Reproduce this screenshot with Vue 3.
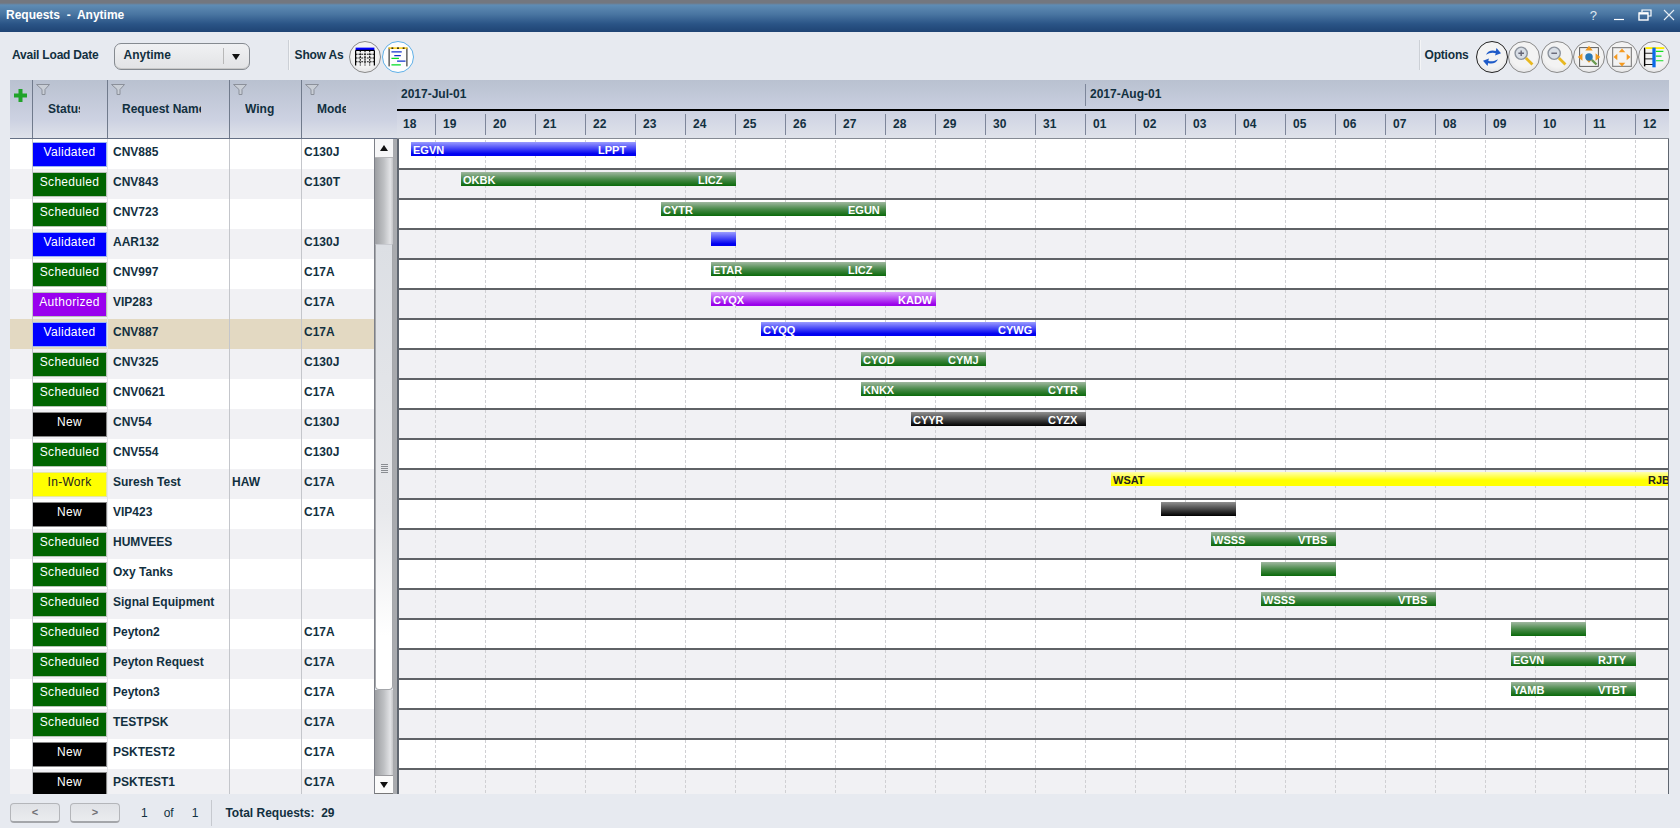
<script setup>
const rows = [
  ['Validated','CNV885','','C130J'],['Scheduled','CNV843','','C130T'],['Scheduled','CNV723','',''],
  ['Validated','AAR132','','C130J'],['Scheduled','CNV997','','C17A'],['Authorized','VIP283','','C17A'],
  ['Validated','CNV887','','C17A'],['Scheduled','CNV325','','C130J'],['Scheduled','CNV0621','','C17A'],
  ['New','CNV54','','C130J'],['Scheduled','CNV554','','C130J'],['In-Work','Suresh Test','HAW','C17A'],
  ['New','VIP423','','C17A'],['Scheduled','HUMVEES','',''],['Scheduled','Oxy Tanks','',''],
  ['Scheduled','Signal Equipment','',''],['Scheduled','Peyton2','','C17A'],['Scheduled','Peyton Request','','C17A'],
  ['Scheduled','Peyton3','','C17A'],['Scheduled','TESTPSK','','C17A'],['New','PSKTEST2','','C17A'],['New','PSKTEST1','','C17A'],
].map(r => ({ status: r[0], name: r[1], wing: r[2], model: r[3] }))

const bars = [
  [411,636,'Validated','EGVN','LPPT'],[461,736,'Scheduled','OKBK','LICZ'],[661,886,'Scheduled','CYTR','EGUN'],
  [711,736,'Validated','',''],[711,886,'Scheduled','ETAR','LICZ'],[711,936,'Authorized','CYQX','KADW'],
  [761,1036,'Validated','CYQQ','CYWG'],[861,986,'Scheduled','CYOD','CYMJ'],[861,1086,'Scheduled','KNKX','CYTR'],
  [911,1086,'New','CYYR','CYZX'],null,[1111,1686,'In-Work','WSAT','RJB'],
  [1161,1236,'New','',''],[1211,1336,'Scheduled','WSSS','VTBS'],[1261,1336,'Scheduled','',''],
  [1261,1436,'Scheduled','WSSS','VTBS'],[1511,1586,'Scheduled','',''],[1511,1636,'Scheduled','EGVN','RJTY'],
  [1511,1636,'Scheduled','YAMB','VTBT'],null,null,null,
]

const days = ['18','19','20','21','22','23','24','25','26','27','28','29','30','31','01','02','03','04','05','06','07','08','09','10','11','12']
const cls = s => s.toLowerCase().replace('-', '')
const columns = [
  { label: 'Status', w: 75, pad: 15, clip: 32 },
  { label: 'Request Name', w: 122, pad: 14, clip: 79 },
  { label: 'Wing', w: 72, pad: 15, clip: 40 },
  { label: 'Model', w: 93, pad: 15, clip: 29 },
]
</script>

<template>
  <div class="page">
    <header class="titlebar">
      <span class="title">Requests&nbsp; -&nbsp; Anytime</span>
      <div class="winbtns">
        <span class="q">?</span>
        <svg width="12" height="12" viewBox="0 0 12 12"><path d="M1 10.500h10" stroke="#fff" stroke-width="1.200"/></svg>
        <svg width="14" height="12" viewBox="0 0 14 12" fill="none" stroke="#fff"><path d="M4 3V1h9v6h-3" stroke-width="1.200"/><rect x="1" y="4" width="9" height="7" stroke-width="1.400"/><path d="M1 4.500h9" stroke-width="2"/></svg>
        <svg class="closex" width="12" height="12" viewBox="0 0 12 12"><path d="M1 1l10 10M11 1L1 11" stroke="#e8eef4" stroke-width="1.100"/></svg>
      </div>
    </header>

    <div class="toolbar">
      <span class="tlabel">Avail Load Date</span>
      <div class="combo"><span class="combotext">Anytime</span><i class="combosep"></i><i class="arrow"></i></div>
      <i class="vsep first"></i>
      <span class="tlabel">Show As</span>
      <div class="iconset">
        <button class="round">
          <svg viewBox="0 0 32 32" width="30" height="30"><rect x="6" y="6" width="20" height="3.500" fill="#00f"/><path d="M6 13h20M6 17h20M6 21h20M11 9v16M16 9v16M21 9v16" fill="none" stroke="#111" stroke-width="1.200" stroke-dasharray="2 1"/><path d="M6 9v16M26 9v16M6 9h20" stroke="#000" stroke-width="1.300"/></svg>
        </button>
        <button class="round active">
          <svg viewBox="0 0 32 32" width="30" height="30"><path d="M6.500 6v20M25.500 6v20" stroke="#000"/><path d="M6 6.500h20" stroke="#fc0" stroke-width="1.500"/><path d="M9 6.500h2M15 6.500h2M21 6.500h2" stroke="#000" stroke-width="1.500"/><path d="M9 10.500h11M12 14.500h7M15 20.500h9" stroke="#13c" stroke-width="1.300"/><path d="M9 17.500h8M9 24.500h10" stroke="#0d2" stroke-width="1.300"/></svg>
        </button>
      </div>
      <div class="spacer"></div>
      <i class="vsep"></i>
      <span class="tlabel opt">Options</span>
      <div class="iconset opts">
        <button class="round dark">
          <svg viewBox="0 0 32 32" width="30" height="30" fill="#1f5bc8"><g transform="translate(16 16) scale(.8) translate(-16 -16)"><path d="M8 13c2-5 8-7 13-5l1-4 6 7-8 3 1-3c-4-1.500-9-.500-13 2z"/><path d="M24 19c-2 5-8 7-13 5l-1 4-6-7 8-3-1 3c4 1.500 9 .500 13-2z"/></g></svg>
        </button>
        <button class="round">
          <svg viewBox="0 0 32 32" width="30" height="30"><circle cx="13" cy="12" r="6.500" fill="#d8dee6" stroke="#8d949e" stroke-width="1.500"/><path d="M10 12h6M13 9v6" stroke="#667" stroke-width="1.500"/><path d="M18 17l7 7" stroke="#e8b820" stroke-width="3"/></svg>
        </button>
        <button class="round">
          <svg viewBox="0 0 32 32" width="30" height="30"><circle cx="13" cy="12" r="6.500" fill="#d8dee6" stroke="#8d949e" stroke-width="1.500"/><path d="M10 12h6" stroke="#667" stroke-width="1.500"/><path d="M18 17l7 7" stroke="#e8b820" stroke-width="3"/></svg>
        </button>
        <button class="round">
          <svg viewBox="0 0 32 32" width="30" height="30"><rect x="6" y="6" width="20" height="20" fill="none" stroke="#555"/><path d="M16 4l4 5h-8zM4 16l5-4v8zM28 16l-5-4v8zM16 22l-3-3h6z" fill="#f09a20"/><circle cx="16" cy="16" r="4" fill="#2878b8"/><path d="M19 19l5 5" stroke="#6a9a50" stroke-width="2.500"/></svg>
        </button>
        <button class="round">
          <svg viewBox="0 0 32 32" width="30" height="30"><rect x="6" y="6" width="20" height="20" fill="none" stroke="#888" stroke-width="1.300"/><path d="M16 7l3.500 4h-7zM16 26l-3.500-4h7zM7 16l4-3.500v7zM25 16l-4-3.500v7z" fill="#f59a20"/></svg>
        </button>
        <button class="round">
          <svg viewBox="0 0 32 32" width="30" height="30"><path d="M6 6v20" stroke="#000" stroke-width="1.500"/><path d="M7 6.500h20" stroke="#fe0" stroke-width="2"/><path d="M6 12h9M6 18h9M6 24h9" stroke="#111"/><path d="M18 10h8M18 15h6M18 20h8" stroke="#1d2" stroke-width="1.300"/><path d="M16 6v21" stroke="#0a6ae8" stroke-width="3.500"/></svg>
        </button>
      </div>
    </div>

    <main class="main">
      <section class="left">
        <div class="lhead">
          <div class="addcell">
            <svg width="13" height="13" viewBox="0 0 13 13"><path d="M4.500 0h4v4.500H13v4H8.500V13h-4V8.500H0v-4h4.500z" fill="#21a32a"/></svg>
          </div>
          <div v-for="c in columns" :key="c.label" class="hcell" :style="{ width: c.w + 'px' }">
            <svg class="funnel" width="14" height="11" viewBox="0 0 14 11"><path d="M.5.500h13L9 5.500v5H6v-5z" fill="#c9ced6" stroke="#8b909a"/></svg>
            <div class="hlabel" :style="{ marginLeft: c.pad + 'px', width: c.clip + 'px' }">{{ c.label }}</div>
          </div>
        </div>
        <div class="lbody">
          <div class="rows">
            <div v-for="(r, i) in rows" :key="r.name" class="row" :class="{ alt: i % 2 === 1, sel: i === 6 }">
              <div class="c c0"></div>
              <div class="c c1"><div class="badge" :class="cls(r.status)">{{ r.status }}</div></div>
              <div class="c c2">{{ r.name }}</div>
              <div class="c c3">{{ r.wing }}</div>
              <div class="c c4">{{ r.model }}</div>
            </div>
          </div>
          <div class="scroll">
            <div class="sbtn"><i class="tri up"></i></div>
            <div class="strack t1"></div>
            <div class="thumb"><span class="grip"></span></div>
            <div class="strack t2"></div>
            <div class="sbtn dn"><i class="tri"></i></div>
          </div>
        </div>
      </section>

      <section class="right">
        <div class="months">
          <span class="month m1">2017-Jul-01</span>
          <span class="month m2">2017-Aug-01</span>
        </div>
        <div class="days">
          <div v-for="(d, i) in days" :key="i" class="day" :class="{ firstd: i === 0, lastd: i === days.length - 1 }">{{ d }}</div>
        </div>
        <div class="gbody">
          <div v-for="(b, i) in bars" :key="i" class="grow" :class="{ alt: i % 2 === 1 }">
            <div class="gcells">
              <i v-for="(d, j) in days" :key="j" class="gcell" :class="{ firstd: j === 0, lastd: j === days.length - 1 }"></i>
            </div>
            <div v-if="b" class="bar" :class="cls(b[2])" :style="{ left: (b[0] - 399) + 'px', width: (b[1] - b[0]) + 'px' }">
              <span>{{ b[3] }}</span><span class="endl">{{ b[4] }}</span>
            </div>
          </div>
        </div>
      </section>
    </main>

    <footer class="footer">
      <button class="pg">&lt;</button>
      <button class="pg">&gt;</button>
      <span class="pnum n1">1</span><span class="pnum n2">of</span><span class="pnum n3">1</span>
      <i class="fsep"></i>
      <span class="total">Total Requests:&nbsp; 29</span>
    </footer>
  </div>
</template>

<style>
html, body { margin: 0; background: #e7eaf0; }
</style>

<style scoped>
.page { width: 1680px; height: 828px; overflow: hidden; background: #e7eaf0; font-family: "Liberation Sans", Arial, sans-serif; font-size: 12px; color: #12303f; }
.titlebar { height: 32px; box-sizing: border-box; padding: 0 5px 2px 6px; display: flex; align-items: center; justify-content: space-between; background: linear-gradient(#73777f 0, #73777f 3px, #5f8cb4 5px, #4a76a2 14px, #2a5486 24px, #1f4474 32px); color: #fff; }
.title { font-weight: 700; }
.winbtns { display: flex; align-items: center; gap: 13px; }
.q { font-size: 13px; color: #dfe8f0; margin-right: 3px; }
.closex { margin-left: -2px; }

.toolbar { height: 48px; display: flex; align-items: center; padding-left: 12px; box-sizing: border-box; }
.tlabel { font-weight: 700; letter-spacing: -.2px; margin-top: -2px; }
.combo { margin-left: 15px; width: 136px; height: 27px; box-sizing: border-box; margin-top: 1px; border: 1px solid #858a90; border-radius: 7px; background: linear-gradient(#f0f1f3, #e2e3e5); display: flex; align-items: center; position: relative; box-shadow: inset 0 -1px 0 #c8c8c8; }
.combotext { font-weight: 700; margin-left: 9px; margin-top: -3px; }
.combosep { position: absolute; left: 108px; top: 4px; height: 16px; width: 1px; background: #b8b8b8; }
.arrow { position: absolute; left: 117px; top: 10px; border: 4.500px solid transparent; border-top: 6px solid #111; border-bottom: 0; }
.vsep { width: 1px; height: 30px; background: #ccd0d6; border-right: 1px solid #f4f5f7; margin-top: -2px; }
.vsep.first { margin-left: 38px; margin-right: 5px; }
.iconset { display: flex; align-items: center; gap: 1px; margin-left: 6px; margin-top: 2px; }
.opt { margin-left: 4px; }
.opts { margin-left: 7px; margin-right: 10px; gap: .5px; }
.spacer { flex: 1; }
.round { width: 32px; height: 32px; padding: 0; border-radius: 50%; border: 1px solid #8a8a8a; background: radial-gradient(circle at 50% 40%, #f3f3f3 55%, #d9d9dc); display: flex; align-items: center; justify-content: center; box-sizing: border-box; }
.round.active { background: #fdfdfd; border: 1px solid #5fb0e8; }
.round.dark { border: 1.500px solid #222; }

.main { display: flex; height: 714px; padding: 0 11px 0 10px; }
.left { width: 387px; flex: none; }
.lhead { height: 59px; display: flex; box-sizing: border-box; border-bottom: 1px solid #667085; background: linear-gradient(#b9c1d0, #cdd2e2 70%, #dfe2ea); }
.addcell { width: 22px; padding: 9px 0 0 4px; box-sizing: border-box; flex: none; }
.hcell { box-sizing: border-box; border-left: 1px solid #707a8c; position: relative; flex: none; }
.hcell:last-child { width: 93px; }
.funnel { position: absolute; left: 3px; top: 4px; }
.hlabel { margin-top: 22px; font-weight: 700; white-space: nowrap; overflow: hidden; height: 14px; line-height: 14px; }
.lbody { display: flex; height: 655px; }
.rows { width: 364px; overflow: hidden; flex: none; }
.row { height: 30px; display: flex; background: #fff; }
.row.alt { background: #f1f1f4; }
.row.sel { background: #e3d9c2; }
.c { box-sizing: border-box; height: 30px; line-height: 27px; font-weight: 700; white-space: nowrap; overflow: hidden; flex: none; }
.c0 { width: 22px; }
.c1 { width: 75px; padding-top: 3px; border-left: 1px solid #c2c4c9; }
.c2 { width: 122px; padding-left: 5px; border-left: 1px solid #e4e5e8; }
.c3 { width: 72px; padding-left: 2px; border-left: 1px solid #c4c6cb; }
.c4 { width: 73px; padding-left: 2px; border-left: 1px solid #c4c6cb; }
.badge { height: 25px; line-height: 19px; text-align: center; font-weight: 400; color: #fff; letter-spacing: .3px; box-sizing: border-box; border: 1px solid #b9c2b9; border-left: 0; width: 74px; }
.validated { background: #0000ff; border-color: #9db6f0; }
.scheduled { background: #006400; }
.authorized { background: #9900ee; }
.new { background: #000; border-color: #888; }
.inwork { background: #ffff00; color: #222; border-color: #e6e6a0; }

.scroll { width: 23px; box-sizing: border-box; flex: none; border-left: 1px solid #7d8088; border-right: 4px solid #a9abaf; display: flex; flex-direction: column; height: 655px; }
.sbtn { height: 19px; background: #f6f6f7; border-bottom: 1px solid #b5b5b8; box-sizing: border-box; display: flex; align-items: center; justify-content: center; flex: none; }
.sbtn.dn { border-top: 1px solid #9a9a9e; border-bottom: 1px solid #777; background: #fbfbfb; }
.tri { border: 4.500px solid transparent; border-bottom: 6px solid #111; border-top: 0; }
.tri:not(.up) { border-top: 6px solid #111; border-bottom: 0; }
.strack { background: linear-gradient(90deg, #9c9ea2, #bfc1c4 50%, #e2e3e6 85%, #c4c5c8); flex: none; }
.t1 { height: 86px; }
.t2 { flex: 1; }
.thumb { height: 446px; flex: none; background: linear-gradient(#dcdfe4, #e8e9ec 60%, #fff 88%); border: 1px solid #a5a7ab; border-top-color: #c8cad0; border-radius: 0 0 4px 4px; box-sizing: border-box; display: flex; align-items: center; justify-content: center; position: relative; }
.grip { width: 7px; height: 9px; background: repeating-linear-gradient(#8a8d92 0, #8a8d92 1px, transparent 1px, transparent 2px); margin-top: 3px; }

.right { flex: 1; min-width: 0; display: flex; flex-direction: column; }
.months { height: 29px; flex: none; display: flex; background: linear-gradient(#b9c1d0, #c9cfe0); border-bottom: 0; }
.month { font-weight: 700; line-height: 28px; box-sizing: border-box; padding-left: 4px; }
.m1 { width: 689px; }
.m2 { position: relative; }
.m2::before { content: ""; position: absolute; left: -1px; top: 4px; height: 22px; width: 1px; background: #7d869a; }
.days { height: 30px; flex: none; display: flex; box-sizing: border-box; border-top: 2px solid #000; border-bottom: 1px solid #858a93; background: linear-gradient(#cdd2e2, #dfe2ea); font-weight: 700; }
.day { width: 50px; flex: none; box-sizing: border-box; padding-left: 7px; line-height: 27px; position: relative; }
.day::after { content: ""; position: absolute; right: 0; top: 3px; height: 21px; width: 1px; background: #7d869a; }
.firstd { width: 39px; padding-left: 6px; }
.lastd { width: 33px; }
.lastd::after { display: none; }
.gbody { height: 655px; padding-top: 1px; overflow: hidden; border-left: 2px solid #5f6670; border-right: 1px solid #5f6670; box-sizing: border-box; background: #fff; }
.grow { height: 30px; box-sizing: border-box; border-bottom: 2px solid #5f6266; background: #fff; position: relative; overflow: hidden; }
.grow.alt { background: #f1f1f4; }
.gcells { display: flex; height: 100%; margin-left: -2px; }
.gcell { width: 50px; flex: none; box-sizing: border-box; border-right: 1px dashed #d0d0d3; }
.gcell.firstd { width: 39px; }
.gcell.lastd { width: 33px; border-right: 0; }
.bar { position: absolute; top: 2px; height: 14px; display: flex; font-size: 11px; font-weight: 700; line-height: 17px; color: #fff; white-space: nowrap; overflow: hidden; padding-left: 2px; box-sizing: border-box; }
.bar .endl { position: absolute; right: 2px; width: 36px; }
.bar.validated { background: linear-gradient(#9a9cff, #0000f0 85%); }
.bar.scheduled { background: linear-gradient(#a0b8a0, #4a8a4a 50%, #0a6a0a); }
.bar.authorized { background: linear-gradient(#dca0ff, #9a00ea 90%); }
.bar.new { background: linear-gradient(#909090, #000); }
.bar.inwork { background: linear-gradient(#ffffb0, #ffff00 60%); color: #222; }

.footer { height: 34px; display: flex; align-items: center; padding: 3px 0 0 10px; box-sizing: border-box; position: relative; }
.pg { width: 50px; height: 20px; margin-right: 10px; padding: 0; border: 1px solid #b4b6ba; border-bottom: 2px solid #a4a6aa; border-radius: 4px; background: linear-gradient(#e0e2e6, #eaecef); color: #707074; font: 700 11px "Liberation Sans", sans-serif; line-height: 12px; }
.pnum { line-height: 16px; }
.n1 { margin-left: 11px; }
.n2 { margin-left: 16px; }
.n3 { margin-left: 18px; }
.fsep { width: 1px; height: 26px; background: #c6c9cf; margin-left: 13px; }
.total { margin-left: 13px; font-weight: 700; }
</style>
